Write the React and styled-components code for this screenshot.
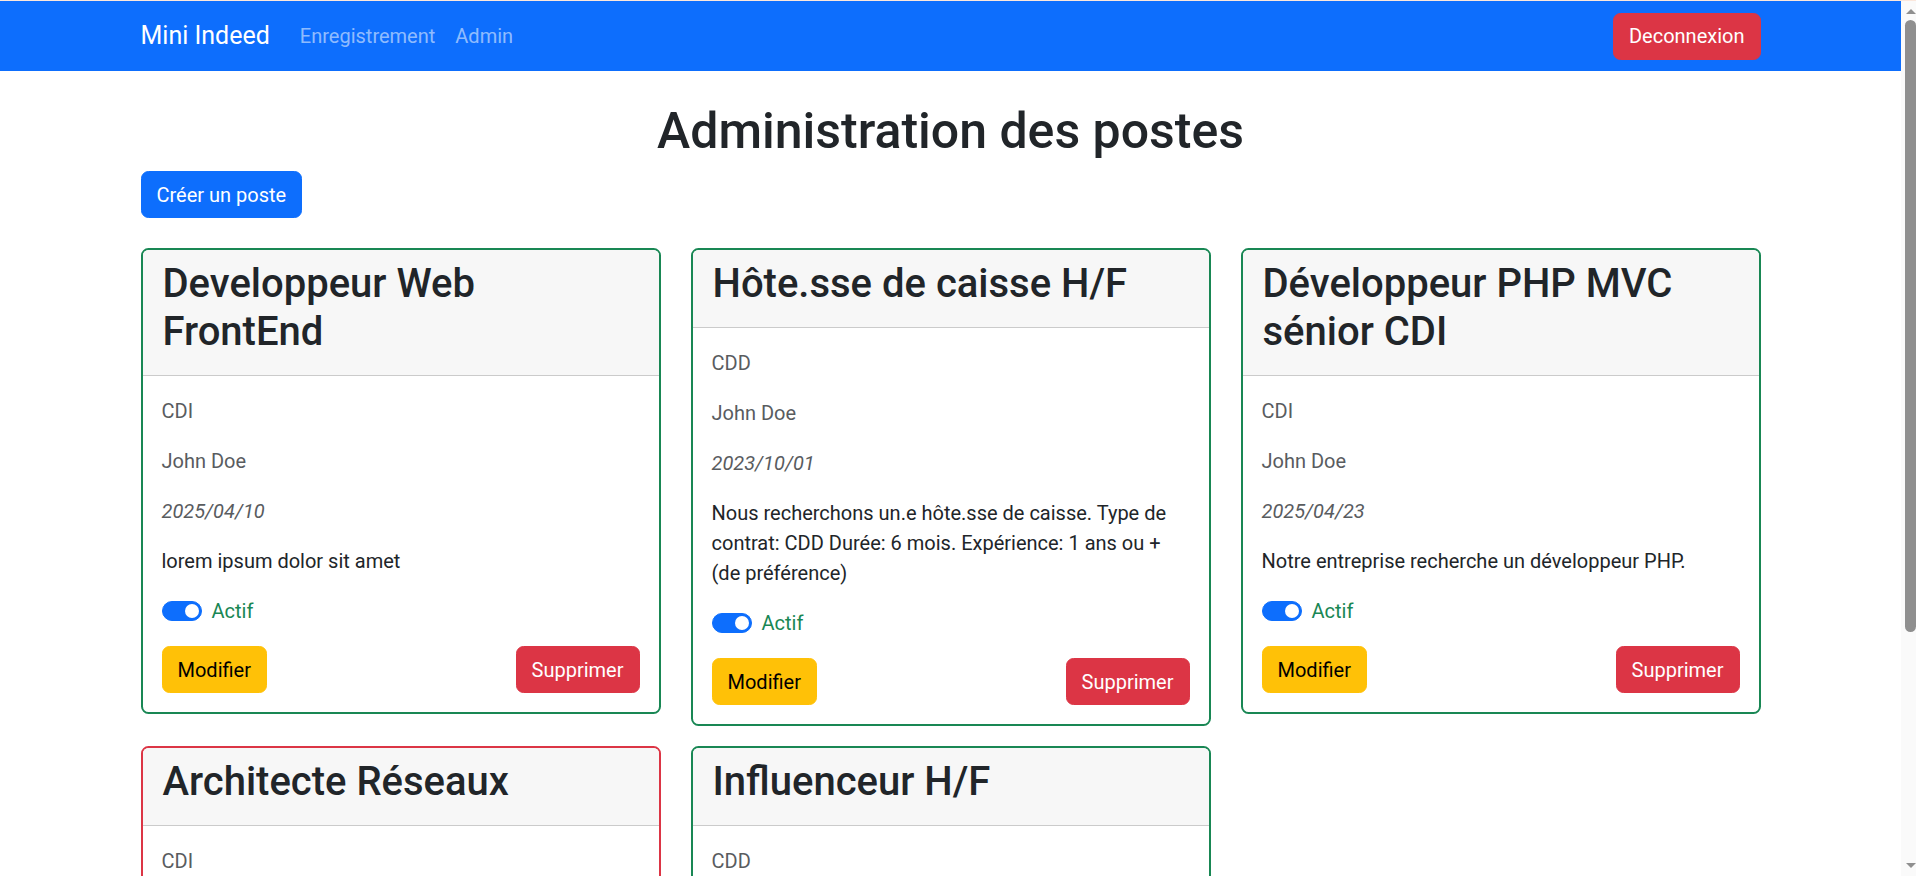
import React from 'react';
import styled, { createGlobalStyle } from 'styled-components';

const FONT = 'Roboto, "Liberation Sans", Arial, sans-serif';

const GlobalStyle = createGlobalStyle`
  html, body {
    margin: 0;
    padding: 0;
  }
  body {
    font-family: ${FONT};
    font-size: 20px;
    line-height: 1.5;
    color: #212529;
    background: #fff;
    border-top: 1px solid #fbe7dc;
  }
  * {
    box-sizing: border-box;
  }
`;

const postes = [
  {
    id: 1,
    titre: 'Developpeur Web FrontEnd',
    contrat: 'CDI',
    auteur: 'John Doe',
    date: '2025/04/10',
    description: 'lorem ipsum dolor sit amet',
    actif: true,
  },
  {
    id: 2,
    titre: 'Hôte.sse de caisse H/F',
    contrat: 'CDD',
    auteur: 'John Doe',
    date: '2023/10/01',
    description:
      'Nous recherchons un.e hôte.sse de caisse. Type de contrat: CDD Durée: 6 mois. Expérience: 1 ans ou + (de préférence)',
    actif: true,
  },
  {
    id: 3,
    titre: 'Développeur PHP MVC sénior CDI',
    contrat: 'CDI',
    auteur: 'John Doe',
    date: '2025/04/23',
    description: 'Notre entreprise recherche un développeur PHP.',
    actif: true,
  },
  {
    id: 4,
    titre: 'Architecte Réseaux',
    contrat: 'CDI',
    auteur: 'John Doe',
    date: '2025/03/12',
    description: 'Conception et maintenance de notre infrastructure réseau.',
    actif: false,
  },
  {
    id: 5,
    titre: 'Influenceur H/F',
    contrat: 'CDD',
    auteur: 'John Doe',
    date: '2024/11/05',
    description: 'Promotion de nos offres sur les réseaux sociaux.',
    actif: true,
  },
];

const App = () => {
  return (
    <>
      <GlobalStyle />
      <Page>
        <Navbar>
          <Container>
            <NavInner>
              <Brand href="#">Mini Indeed</Brand>
              <NavLinks>
                <NavLink href="#">Enregistrement</NavLink>
                <NavLink href="#">Admin</NavLink>
              </NavLinks>
              <NavRight>
                <Button variant="danger">Deconnexion</Button>
              </NavRight>
            </NavInner>
          </Container>
        </Navbar>

        <Container>
          <PageTitle>Administration des postes</PageTitle>
          <CreateRow>
            <Button variant="primary">Créer un poste</Button>
          </CreateRow>

          <CardGrid>
            {postes.map((p) => (
              <Card key={p.id} active={p.actif}>
                <CardHeader>
                  <CardTitle>{p.titre}</CardTitle>
                </CardHeader>
                <CardBody>
                  <Meta>{p.contrat}</Meta>
                  <Meta>{p.auteur}</Meta>
                  <Meta italic>{p.date}</Meta>
                  <Description>{p.description}</Description>
                  <SwitchRow>
                    <Switch on={p.actif} />
                    <SwitchLabel active={p.actif}>{p.actif ? 'Actif' : 'Inactif'}</SwitchLabel>
                  </SwitchRow>
                  <Actions>
                    <Button variant="warning">Modifier</Button>
                    <Button variant="danger">Supprimer</Button>
                  </Actions>
                </CardBody>
              </Card>
            ))}
          </CardGrid>
        </Container>
      </Page>

      {/* window scrollbar, as seen in the screenshot */}
      <ScrollTrack>
        <ArrowUp />
        <Thumb />
        <ArrowDown />
      </ScrollTrack>
    </>
  );
};

const colors = {
  primary: { bg: '#0d6efd', fg: '#fff' },
  danger: { bg: '#dc3545', fg: '#fff' },
  warning: { bg: '#ffc107', fg: '#000' },
};

const Page = styled.div`
  margin-right: 15px;
`;

const ScrollTrack = styled.aside`
  position: fixed;
  top: 1px;
  right: 0;
  bottom: 0;
  width: 15px;
  background: #fafafa;
  display: flex;
  flex-direction: column;
  align-items: flex-end;
  padding: 0 0 0 4px;
`;

const ArrowUp = styled.div`
  width: 0;
  height: 0;
  margin: 8px auto 6px;
  border-left: 5px solid transparent;
  border-right: 5px solid transparent;
  border-bottom: 5px solid #8f8f8f;
`;

const Thumb = styled.div`
  width: 11px;
  height: 612px;
  border-radius: 6px;
  background: #8f8f8f;
`;

const ArrowDown = styled.div`
  width: 0;
  height: 0;
  margin: auto auto 8px;
  border-left: 5px solid transparent;
  border-right: 5px solid transparent;
  border-top: 5px solid #8f8f8f;
`;

const Container = styled.div`
  max-width: 1650px;
  margin: 0 auto;
  padding: 0 15px;
`;

const Navbar = styled.nav`
  background-color: #0d6efd;
  padding: 10px 0;
`;

const NavInner = styled.div`
  display: flex;
  align-items: center;
`;

const Brand = styled.a`
  font-size: 25px;
  line-height: 1.5;
  padding: 6px 0;
  margin-right: 20px;
  color: #fff;
  text-decoration: none;
`;

const NavLinks = styled.ul`
  display: flex;
  list-style: none;
  margin: 0;
  padding: 0;
`;

const NavLink = styled.a`
  display: block;
  padding: 10px;
  font-size: 20px;
  color: rgba(255, 255, 255, 0.55);
  text-decoration: none;
`;

const NavRight = styled.div`
  margin-left: auto;
`;

const Button = styled.button`
  font-family: ${FONT};
  font-size: 20px;
  line-height: 30px;
  padding: 7.5px 15px;
  border-radius: 7.5px;
  border: 1.25px solid ${(p) => colors[p.variant].bg};
  background-color: ${(p) => colors[p.variant].bg};
  color: ${(p) => colors[p.variant].fg};
  cursor: pointer;
`;

const PageTitle = styled.h1`
  font-size: 50px;
  font-weight: 500;
  line-height: 1.2;
  text-align: center;
  margin: 30px 0 10px;
  color: #212529;
`;

const CreateRow = styled.div`
  margin-bottom: 30px;
`;

const CardGrid = styled.div`
  display: grid;
  grid-template-columns: repeat(3, 1fr);
  column-gap: 30px;
  row-gap: 20px;
  align-items: start;
`;

const Card = styled.div`
  border: 2px solid ${(p) => (p.active ? '#198754' : '#dc3545')};
  border-radius: 7.5px;
  overflow: hidden;
  background: #fff;
`;

const CardHeader = styled.div`
  background-color: #f7f7f7;
  border-bottom: 1.25px solid rgba(0, 0, 0, 0.175);
  padding: 10px 20px 9px;
`;

const CardTitle = styled.h2`
  font-size: 40px;
  font-weight: 500;
  line-height: 1.2;
  margin: 0 0 10px;
  color: #212529;
`;

const CardBody = styled.div`
  padding: 20px 19px 19px;
`;

const Meta = styled.p`
  margin: 0 0 20px;
  color: #595c5f;
  font-style: ${(p) => (p.italic ? 'italic' : 'normal')};
`;

const Description = styled.p`
  margin: 0 0 20px;
  color: #212529;
`;

const SwitchRow = styled.div`
  display: flex;
  align-items: center;
  height: 30px;
  margin-bottom: 20px;
`;

const Switch = styled.span`
  position: relative;
  width: 40px;
  height: 20px;
  border-radius: 10px;
  background-color: ${(p) => (p.on ? '#0d6efd' : '#fff')};
  border: 1.25px solid ${(p) => (p.on ? '#0d6efd' : 'rgba(0,0,0,0.25)')};

  &::after {
    content: '';
    position: absolute;
    top: 50%;
    ${(p) => (p.on ? 'right: 2px;' : 'left: 2px;')}
    width: 14px;
    height: 14px;
    margin-top: -7px;
    border-radius: 50%;
    background-color: ${(p) => (p.on ? '#fff' : 'rgba(0,0,0,0.25)')};
  }
`;

const SwitchLabel = styled.span`
  margin-left: 10px;
  color: ${(p) => (p.active ? '#198754' : '#dc3545')};
`;

const Actions = styled.div`
  display: flex;
  justify-content: space-between;
`;

export default App;
